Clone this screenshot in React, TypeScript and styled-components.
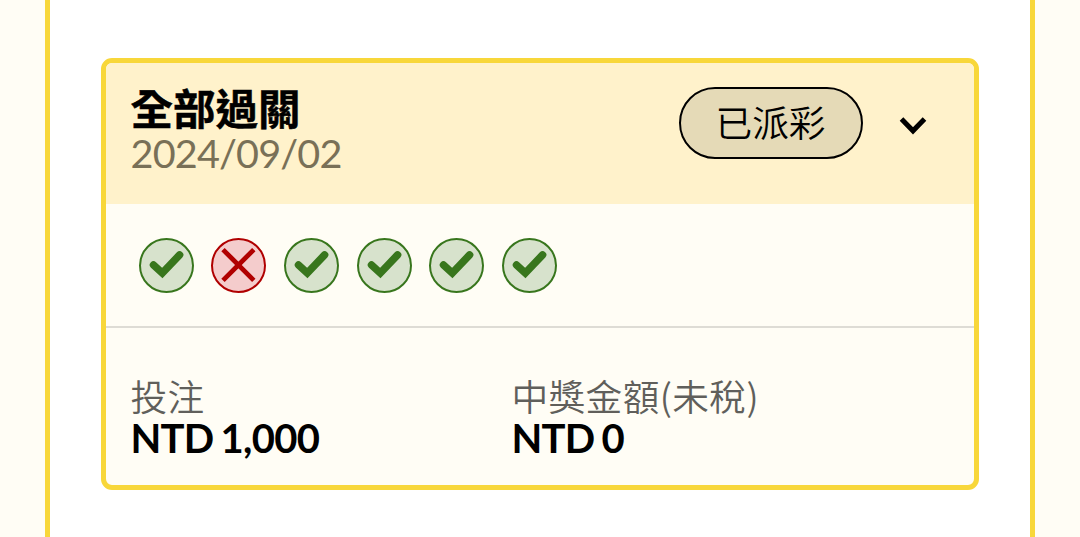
import styled, { createGlobalStyle } from 'styled-components';

const GlobalStyle = createGlobalStyle`
  * {
    box-sizing: border-box;
  }
  body {
    margin: 0;
    background: #fffdf5;
    font-family: Lato, 'Noto Sans CJK TC', sans-serif;
    color: #000;
  }
`;

const Panel = styled.main`
  height: 537px;
  margin: 0 45px;
  padding: 58px 51px 0;
  border: solid #f8d73a;
  border-width: 0 5px;
  background: #fff;
  overflow: hidden;
`;

const Card = styled.section`
  height: 432px;
  border: 5px solid #f8d73a;
  border-radius: 11px;
  background: #fffdf5;
  overflow: hidden;
`;

const CardHeader = styled.header`
  display: flex;
  height: 141px;
  padding: 24px 47px 0 24.6px;
  background: #fff2cb;
`;

const Heading = styled.div`
  flex: 1;
`;

const Title = styled.h2`
  margin: 0;
  font-family: 'Noto Sans CJK TC', sans-serif;
  font-size: 42.5px;
  font-weight: 700;
  line-height: 40px;
  -webkit-text-stroke: 0.5px #000;
`;

const DateText = styled.div`
  font-size: 39.6px;
  line-height: 51px;
  letter-spacing: -0.85px;
  color: #797057;
`;

const Status = styled.div`
  display: flex;
  align-items: center;
  justify-content: center;
  width: 184px;
  height: 72px;
  padding: 0 1px 3px 0;
  border: 2px solid #000;
  border-radius: 36px;
  background: #e5dab7;
  font-family: 'Noto Sans CJK TC', sans-serif;
  font-size: 36.7px;
  font-weight: 350;
  line-height: 1;
`;

const Chevron = styled.svg`
  width: 28px;
  height: 20px;
  margin: 30px 0 0 36px;
  fill: none;
  stroke: #000;
  stroke-width: 5;
`;

const Results = styled.div`
  display: flex;
  gap: 17.6px;
  height: 124px;
  padding: 34px 32.9px 0;
  border-bottom: 2px solid #dedcd5;
`;

const Mark = styled.svg<{ $win: boolean }>`
  flex: none;
  width: 55px;
  height: 55px;
  fill: none;
  stroke: ${({ $win }) => ($win ? '#38761d' : '#b00000')};
  stroke-width: ${({ $win }) => ($win ? 7.5 : 4.8)};
  stroke-linecap: ${({ $win }) => ($win ? 'round' : 'butt')};
  circle {
    fill: ${({ $win }) => ($win ? '#d7e2cc' : '#f4cccc')};
    stroke-width: 2;
  }
`;

const Amounts = styled.div`
  display: grid;
  grid-template-columns: 381px 1fr;
  padding: 46px 24.4px 0;
`;

const Label = styled.div`
  font-family: 'Noto Sans CJK TC', sans-serif;
  font-size: 36.7px;
  font-weight: 350;
  line-height: 42px;
  letter-spacing: 0.4px;
  color: #605f5b;
`;

const Amount = styled.div`
  font-size: 40px;
  font-weight: 700;
  line-height: 44px;
  letter-spacing: -0.7px;
  word-spacing: -2px;
`;

const results = [true, false, true, true, true, true];

const amounts = [
  { label: '投注', value: 'NTD 1,000' },
  { label: '中獎金額(未稅)', value: 'NTD 0' },
];

const ResultMark = ({ win }: { win: boolean }) => (
  <Mark $win={win} viewBox="0 0 55 55">
    <circle cx="27.5" cy="27.5" r="26.5" />
    <path d={win ? 'M14.5 27L23.3 35L40.6 16.9' : 'M12 11.6L42.8 42.4M42.8 11.6L12 42.4'} />
  </Mark>
);

const App = () => {
  return (
    <>
      <GlobalStyle />
      <Panel>
        <Card>
          <CardHeader>
            <Heading>
              <Title>全部過關</Title>
              <DateText>2024/09/02</DateText>
            </Heading>
            <Status>已派彩</Status>
            <Chevron viewBox="0 0 28 20">
              <path d="M2.5 2L14 13.8L25.5 2" />
            </Chevron>
          </CardHeader>
          <Results>
            {results.map((win, i) => (
              <ResultMark key={i} win={win} />
            ))}
          </Results>
          <Amounts>
            {amounts.map(({ label, value }) => (
              <div key={label}>
                <Label>{label}</Label>
                <Amount>{value}</Amount>
              </div>
            ))}
          </Amounts>
        </Card>
      </Panel>
    </>
  );
};

export default App;
